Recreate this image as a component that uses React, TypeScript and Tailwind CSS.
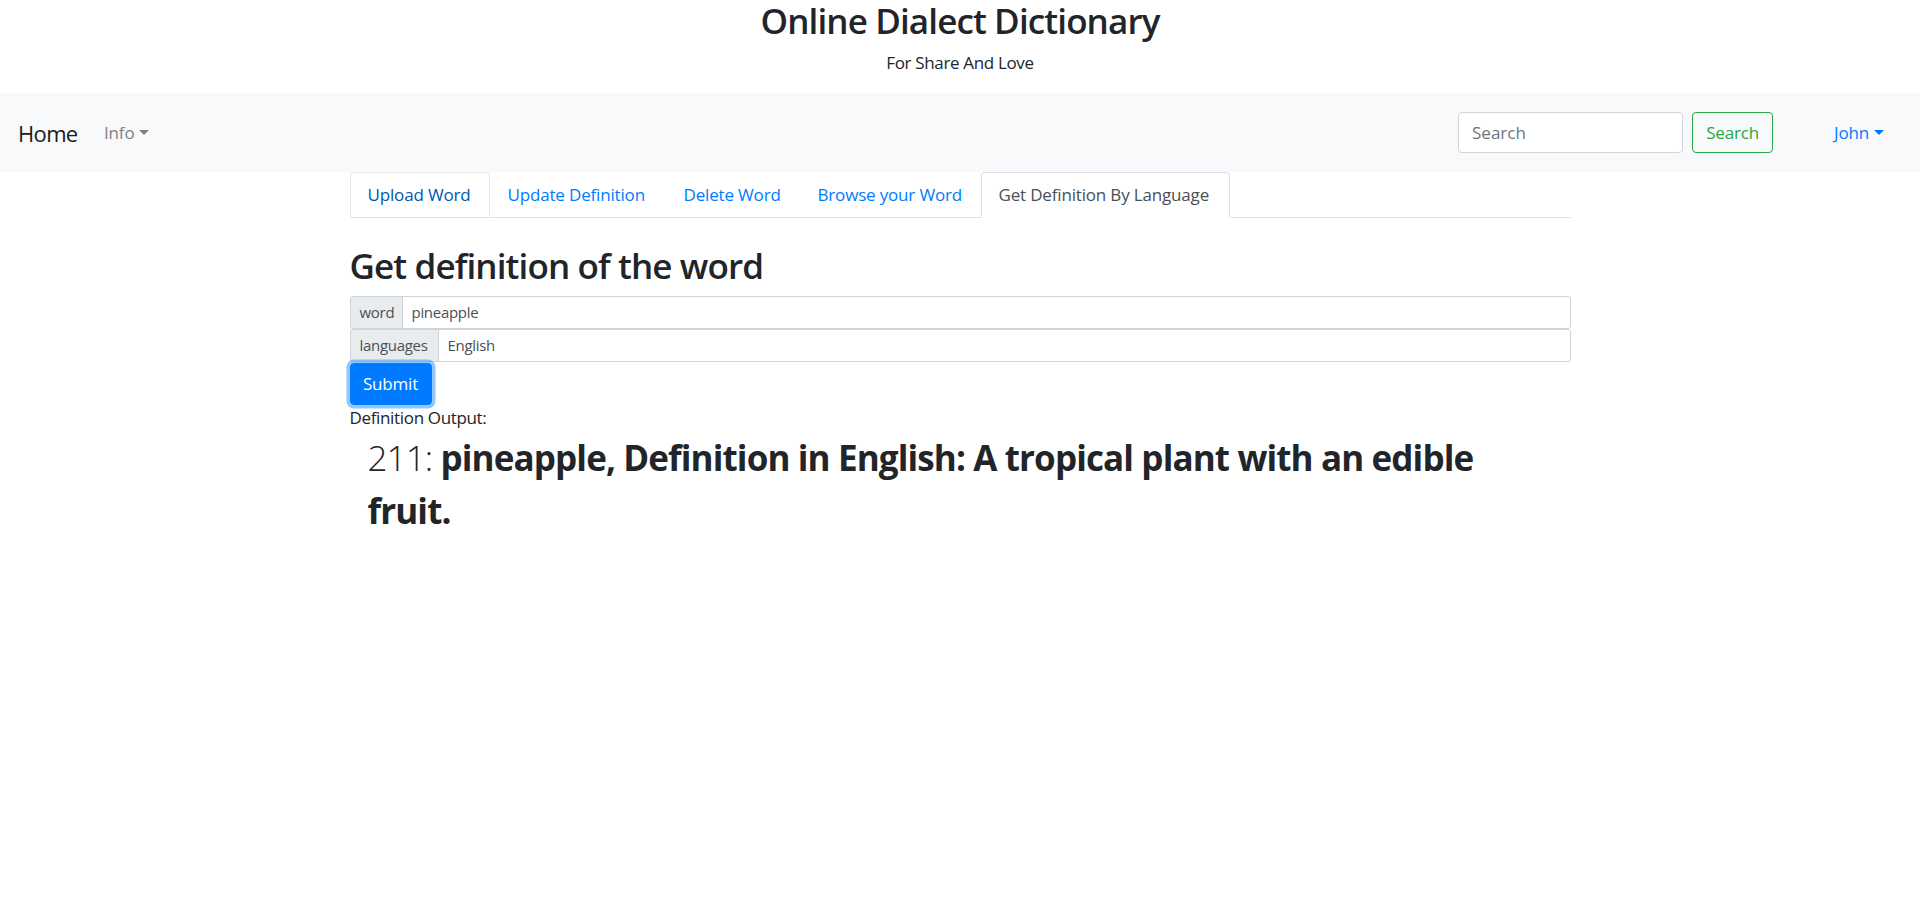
import React from "react";

const TABS = [
  { label: "Upload Word", w: "w-[140px]", state: "hover" },
  { label: "Update Definition", w: "w-[176px]", state: "" },
  { label: "Delete Word", w: "w-[134px]", state: "" },
  { label: "Browse your Word", w: "w-[181px]", state: "" },
  { label: "Get Definition By Language", w: "w-[249px]", state: "active" },
];

function Caret({ color }: { color: string }) {
  return (
    <span
      className={`inline-block ml-[5px] w-0 h-0 border-l-[5px] border-r-[5px] border-t-[5px] border-l-transparent border-r-transparent ${color}`}
    />
  );
}

export default function App() {
  return (
    <div className="min-h-screen bg-white text-[#212529] font-['Open_Sans','Noto_Sans',sans-serif]">
      {/* header */}
      <div className="text-center">
        <h2 className="text-[35px] leading-[42px] font-semibold tracking-[-0.025em]">Online Dialect Dictionary</h2>
        <p className="mt-[8px] mb-[17px] text-[17px] leading-[26px] tracking-[-0.02em]">For Share And Love</p>
      </div>

      {/* navbar */}
      <nav className="h-[79px] bg-[#f8f9fa] flex items-center pl-[18px] pr-[36px]">
        <a className="text-[22px] leading-[30px] text-[#1a1a1a] tracking-[-0.03em] w-[86px]">Home</a>
        <a className="flex items-center text-[17px] text-[#808181] tracking-[-0.01em]">
          Info
          <Caret color="border-t-[#808181]" />
        </a>
        <div className="flex-1" />
        <form className="flex items-center">
          <input
            placeholder="Search"
            className="w-[225px] h-[41px] rounded-[4px] border border-[#ced4da] bg-white px-[13px] text-[17px] placeholder:text-[#6c757d] outline-none"
          />
          <button
            type="button"
            className="ml-[9px] w-[81px] h-[41px] rounded-[4px] border border-[#28a745] text-[#28a745] text-[17px] tracking-[-0.01em]"
          >
            Search
          </button>
        </form>
        <a className="ml-[61px] flex items-center text-[17px] text-[#007bff] tracking-[-0.01em]">
          John
          <Caret color="border-t-[#007bff]" />
        </a>
      </nav>

      {/* content */}
      <main className="w-[1221px] mx-auto">
        <ul className="flex border-b border-[#dee2e6] h-[46px]">
          {TABS.map((t) => (
            <li key={t.label} className={`-mb-px ${t.w}`}>
              <a
                className={
                  "block h-[46px] px-[17px] py-[9px] text-[17px] leading-[26px] tracking-[-0.01em] whitespace-nowrap border rounded-t-[4px] " +
                  (t.state === "active"
                    ? "bg-white text-[#495057] border-[#dee2e6] border-b-white"
                    : t.state === "hover"
                    ? "text-[#0056b3] border-[#e9ecef] border-b-[#dee2e6]"
                    : "text-[#007bff] border-transparent")
                }
              >
                {t.label}
              </a>
            </li>
          ))}
        </ul>

        <h2 className="mt-[27px] mb-[9px] text-[35px] leading-[42px] font-semibold tracking-[-0.025em]">
          Get definition of the word
        </h2>

        <div className="flex h-[33px]">
          <span className="w-[53px] flex items-center px-[9px] bg-[#e9ecef] border border-[#ced4da] rounded-l-[3px] text-[15px] text-[#495057] tracking-[-0.02em]">
            word
          </span>
          <input
            readOnly
            value="pineapple"
            className="flex-1 -ml-px border border-[#ced4da] rounded-r-[3px] px-[9px] text-[15px] text-[#495057] tracking-[-0.02em] outline-none"
          />
        </div>
        <div className="flex h-[33px]">
          <span className="w-[89px] flex items-center px-[9px] bg-[#e9ecef] border border-[#ced4da] rounded-l-[3px] text-[15px] text-[#495057] tracking-[-0.02em]">
            languages
          </span>
          <input
            readOnly
            value="English"
            className="flex-1 -ml-px border border-[#ced4da] rounded-r-[3px] px-[9px] text-[15px] text-[#495057] tracking-[-0.02em] outline-none"
          />
        </div>

        <button
          type="button"
          className="mt-px w-[82px] h-[42px] rounded-[4px] bg-[#007bff] border border-[#007bff] text-white text-[17px] tracking-[-0.01em] shadow-[0_0_0_3.5px_rgba(38,143,255,0.5)]"
        >
          Submit
        </button>

        <div className="text-[17px] leading-[26px] tracking-[-0.02em]">Definition Output:</div>

        <p className="pl-[18px] pr-[80px] text-[35px] leading-[53px] tracking-[-0.025em]">
          <span className="font-light">211:</span>{" "}
          <b className="font-bold">pineapple, Definition in English: A tropical plant with an edible fruit.</b>
        </p>
      </main>
    </div>
  );
}
